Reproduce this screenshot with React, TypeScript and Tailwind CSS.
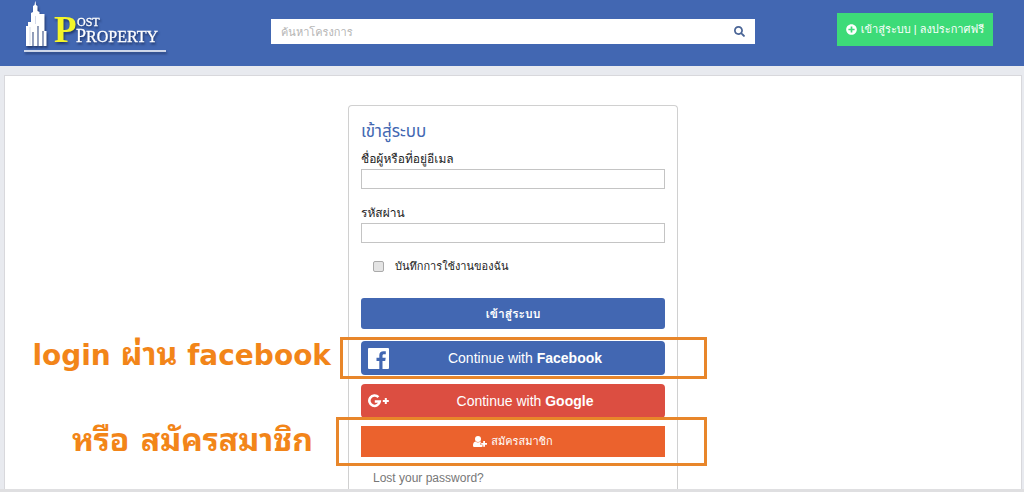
import { FaSearch, FaPlusCircle } from "react-icons/fa";

const fieldClass = "block h-5 w-full border border-[#c4c4c4] bg-white px-1 text-xs outline-none";
const noteClass =
  "absolute inset-y-0 right-full flex items-center font-['DejaVu_Sans','Waree','Noto_Sans_Thai_Looped',sans-serif] text-[28px] leading-none font-bold whitespace-pre text-[#f28519]";

function Logo() {
  return (
    <a href="#" aria-label="Post Property" className="block shrink-0">
      <svg width="146" height="56" viewBox="0 0 146 56" className="drop-shadow-[1px_2px_1px_rgba(20,35,80,0.7)]">
        <path
          d="M2 46V26h2v-4h3V13l2-1V6l1.500-1L11 2l.500-1L12 5l1.500 1v5l2 1v2h5v17h2v15h-3V31h-1v15h-4V26h-1v20H9.500V32h-1v14z"
          fill="#fff"
        />
        <path d="M6 27v18M11.500 16v8" stroke="#a9b6d6" strokeWidth="0.500" />
        <text x="30" y="42" fontFamily="Liberation Serif, serif" fontSize="37" fontWeight="700" fill="#f4f52a">P</text>
        <text x="53" y="26" fontFamily="Liberation Serif, serif" fontSize="12" fill="#fff" stroke="#fff" strokeWidth="0.300">OST</text>
        <text x="52" y="42" fontFamily="Liberation Serif, serif" fontSize="18" fill="#fff" stroke="#fff" strokeWidth="0.300">
          P<tspan fontSize="16">ROPERTY</tspan>
        </text>
        <path d="M0 51h142" stroke="#fff" strokeWidth="1.500" />
      </svg>
    </a>
  );
}

function FacebookIcon() {
  return (
    <svg width="21" height="21" viewBox="0 0 21 21" aria-hidden="true">
      <path
        d="M1 0h19a1 1 0 0 1 1 1v19a1 1 0 0 1-1 1h-5.500v-8h2.700l.5-3.200h-3.200V7.700c0-1 .4-1.500 1.600-1.500h1.700V3.300c-.4 0-1.300-.1-2.400-.1-2.500 0-4.100 1.500-4.100 4.100v2.500H8.500V13h2.800v8H1a1 1 0 0 1-1-1V1a1 1 0 0 1 1-1z"
        fill="#fff"
      />
    </svg>
  );
}

function GooglePlusIcon() {
  return (
    <svg width="21" height="14" viewBox="0 0 21 14" aria-hidden="true" fill="none" stroke="#fff" strokeWidth="2.600">
      <path d="M10.400 3.200A5.200 5.200 0 1 0 11.700 7.500H6.800" />
      <path d="M17.800 4v6M14.800 7h6" strokeWidth="2" />
    </svg>
  );
}

function UserPlusIcon() {
  return (
    <svg width="14" height="12" viewBox="0 0 14 12" aria-hidden="true" fill="#fff">
      <circle cx="5" cy="3" r="3" />
      <path d="M2.500 5.500C.8 5.800 0 7.500 0 9.500 0 10.500.7 11 1.500 11h7c.5 0 .9-.2 1.100-.5V9H7.500V6.500h.8c-.3-.6-.6-.9-.9-1-1.400 1.300-3.500 1.300-4.900 0z" />
      <path d="M10.200 5h1.800v2H14v1.800h-2v2h-1.800v-2h-2V7h2z" />
    </svg>
  );
}

export default function App() {
  return (
    <div className="bg-[#e8eaef] font-['Liberation_Sans','Loma','Noto_Sans',sans-serif] text-[#222]">
      <header className="flex h-[66px] items-start bg-[#4267b2] pr-[31px] pl-6">
        <Logo />
        <form className="mt-[19px] mr-[82px] ml-[101px] flex h-[25px] flex-1 items-center bg-white">
          <input
            type="search"
            aria-label="ค้นหาโครงการ"
            placeholder="ค้นหาโครงการ"
            className="h-full min-w-0 flex-1 bg-transparent pl-[10px] text-[11px] outline-none placeholder:text-[#b5b5b5]"
          />
          <button type="button" aria-label="ค้นหา" className="px-[10px] text-[#4a6596]">
            <FaSearch size={11} />
          </button>
        </form>
        <button
          type="button"
          className="mt-[13px] flex h-[33px] w-[156px] shrink-0 items-center justify-center gap-1 bg-[#3ddb78] text-[11px] whitespace-nowrap text-white"
        >
          <FaPlusCircle size={11} />
          เข้าสู่ระบบ | ลงประกาศฟรี
        </button>
      </header>

      <main className="mt-[9px] mr-[2px] ml-1 border-x border-t border-[#d8d8dc] bg-white pt-[29px]">
        <form className="mx-auto w-full max-w-[330px] rounded-t border border-b-0 border-[#d0d0d0] px-3 pt-3">
          <h1 className="font-['Noto_Sans_Thai','Noto_Sans',sans-serif] text-[17px] leading-7 text-[#4267b2]">เข้าสู่ระบบ</h1>
          <label htmlFor="user" className="mt-[3px] block text-xs leading-5">ชื่อผู้หรือที่อยู่อีเมล</label>
          <input id="user" type="text" className={fieldClass} />
          <label htmlFor="password" className="mt-[14px] block text-xs leading-5">รหัสผ่าน</label>
          <input id="password" type="password" className={fieldClass} />
          <label className="mt-[13px] flex h-5 items-center gap-[11px] pl-3 text-[11px]">
            <input
              type="checkbox"
              className="size-[11px] appearance-none rounded-xs border border-[#aaa] bg-[#e4e4e4] checked:bg-[#4267b2]"
            />
            บันทึกการใช้งานของฉัน
          </label>
          <button type="submit" className="mt-[22px] block h-[31px] w-full rounded-[3px] bg-[#4267b2] text-xs font-bold text-white">
            เข้าสู่ระบบ
          </button>

          <div className="relative mt-3">
            <button type="button" className="flex h-[34px] w-full items-center rounded-[4px] bg-[#4267b2] pl-[7px] text-sm text-white">
              <FacebookIcon />
              <span className="flex-1 pr-1">
                Continue with <b>Facebook</b>
              </span>
            </button>
            <div className="pointer-events-none absolute -top-1 -right-[42px] -bottom-1 -left-[21px] border-[3px] border-[#e8862a]" />
            <p className={`${noteClass} mr-[30px] pb-2`}>
              <span>login <span className="text-[32px] leading-none">ผ่าน</span> facebook</span>
            </p>
          </div>

          <button type="button" className="mt-[9px] flex h-[34px] w-full items-center rounded-[4px] bg-[#dc4e41] pl-[7px] text-sm text-white">
            <GooglePlusIcon />
            <span className="flex-1 pr-1">
              Continue with <b>Google</b>
            </span>
          </button>

          <div className="relative mt-2">
            <button type="button" className="flex h-[31px] w-full items-center justify-center gap-1 bg-[#eb622d] text-[11px] text-white">
              <UserPlusIcon />
              สมัครสมาชิก
            </button>
            <div className="pointer-events-none absolute -top-[9px] -right-[42px] -bottom-[9px] -left-[25px] border-[3px] border-[#e8862a]" />
            <p className={`${noteClass} mr-12 pb-1`}>
              <span className="text-[32px] leading-none">หรือ สมัครสมาชิก</span>
            </p>
          </div>

          <a href="#" className="mt-[11px] block pb-px pl-3 text-xs leading-5 text-[#777]">
            Lost your password?
          </a>
        </form>
      </main>
      <footer className="h-[3px] bg-[#dfdfe1]" />
    </div>
  );
}
